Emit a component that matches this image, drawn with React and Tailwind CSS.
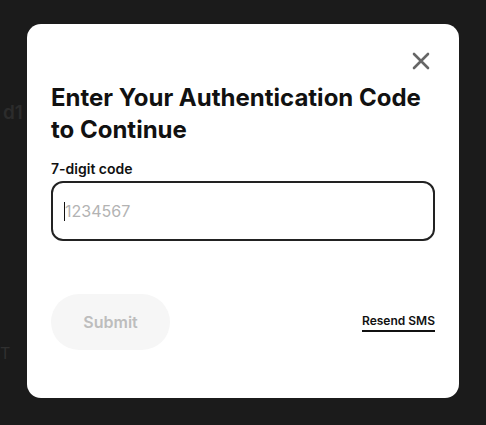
const App = () => {
  return (
    <div className="relative h-[425px] w-[486px] overflow-hidden bg-[#1b1b1b] font-['Inter',sans-serif]">
      {/* dimmed page behind the modal */}
      <div className="absolute left-[3px] top-[99px] text-[19px] font-semibold text-[#2c2c2c]">d1</div>
      <div className="absolute left-[0px] top-[341px] text-[16px] text-[#303030]">T</div>

      <div className="flex h-full items-start justify-center pt-[24px]">
        <div className="relative z-10 h-[374px] w-[432px] rounded-[14px] bg-white px-[24px] pt-[28px]">
          <div className="flex justify-end pr-[5px]">
            <button className="text-[#666666]">
              <svg width="18" height="18" viewBox="0 0 18 18" fill="none" stroke="currentColor" strokeWidth="2.6" strokeLinecap="round">
                <path d="M2 2L16 16M16 2L2 16" />
              </svg>
            </button>
          </div>

          <h2 className="mt-[12px] text-[24px] font-bold leading-[32px] text-[#111111]">
            Enter Your Authentication Code to Continue
          </h2>

          <label className="mt-[13px] block text-[14px] font-semibold leading-[20px] text-[#111111]">
            7-digit code
          </label>
          <div className="relative mt-[2px]">
            <input
              placeholder="1234567"
              className="h-[60px] w-full rounded-[12px] border-2 border-[#222222] px-[12px] text-[16px] text-[#111111] placeholder:text-[#b3b3b3] focus:outline-none"
            />
            <span className="absolute left-[13px] top-[21px] h-[19px] w-px bg-[#111111]" />
          </div>

          <div className="mt-[53px] flex items-center justify-between">
            <button className="h-[56px] w-[119px] rounded-full bg-[#f6f6f6] text-[16px] font-semibold text-[#bdbdbd]">
              Submit
            </button>
            <button className="border-b-2 border-[#111111] pb-[1px] text-[12px] font-semibold leading-[16px] text-[#111111]">
              Resend SMS
            </button>
          </div>
        </div>
      </div>
    </div>
  );
};

export default App;
